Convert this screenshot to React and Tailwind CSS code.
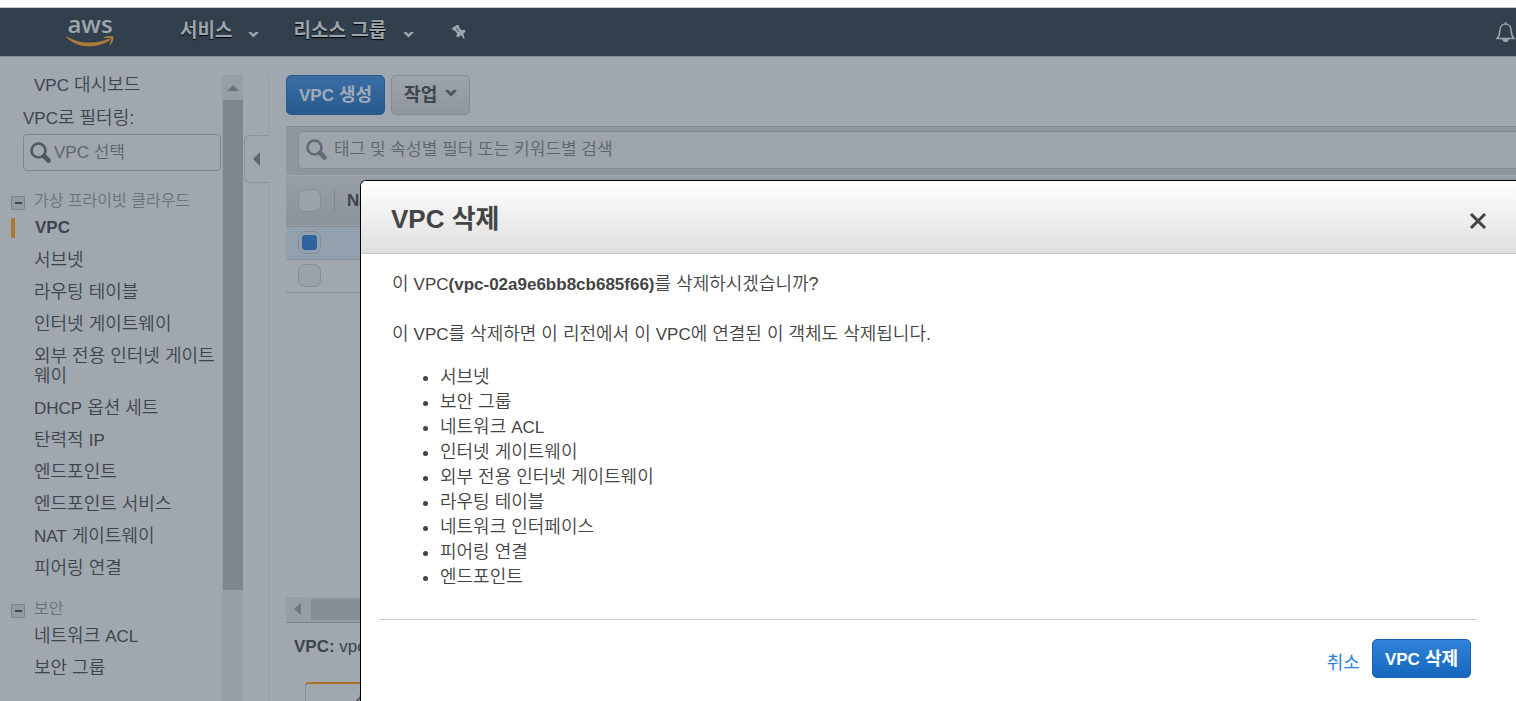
import React from "react";

const Latin = ({ children }) => <span className="text-[17px] leading-none">{children}</span>;

const cloudItems = [
  "서브넷",
  "라우팅 테이블",
  "인터넷 게이트웨이",
  "외부 전용 인터넷 게이트웨이",
  <><Latin>DHCP</Latin> 옵션 세트</>,
  <>탄력적 <Latin>IP</Latin></>,
  "엔드포인트",
  "엔드포인트 서비스",
  <><Latin>NAT</Latin> 게이트웨이</>,
  "피어링 연결",
];

const securityItems = [<>네트워크 <Latin>ACL</Latin></>, "보안 그룹"];

const deletedObjects = [
  "서브넷",
  "보안 그룹",
  <>네트워크 <Latin>ACL</Latin></>,
  "인터넷 게이트웨이",
  "외부 전용 인터넷 게이트웨이",
  "라우팅 테이블",
  "네트워크 인터페이스",
  "피어링 연결",
  "엔드포인트",
];

function Chevron({ className }) {
  return (
    <svg viewBox="0 0 12 8" className={className} aria-hidden="true">
      <path d="M0.5 1 L3.5 1 L6 3.5 L8.5 1 L11.5 1 L11.5 2 L6 7.5 L0.5 2 Z" fill="currentColor" />
    </svg>
  );
}

function SearchIcon({ className }) {
  return (
    <svg viewBox="0 0 22 22" className={className} fill="none" stroke="currentColor" aria-hidden="true">
      <circle cx="8.500" cy="8.500" r="7" strokeWidth="2.6" />
      <path d="M14 14 L18.500 18.500" strokeWidth="4.6" strokeLinecap="round" />
    </svg>
  );
}

function AwsLogo() {
  return (
    <a href="#home" aria-label="aws" className="flex w-12 flex-col items-center pb-[2px] text-[#9da5ad]">
      <span className="h-5 font-['Open_Sans',sans-serif] text-[24px] leading-[16px] font-semibold">aws</span>
      <svg viewBox="0 0 48 11" className="h-[11px] w-12 text-[#a97a3b]" aria-hidden="true">
        <path d="M0.5 0.2 C12 7.500 29 8.500 42 3 C44 2.200 45 3.800 43.4 4.800 C30 13 11.500 12.500 0.2 1.200 Z" fill="currentColor" />
        <path d="M38 1.400 C41 -0.4 46 -0.3 47.300 0.8 C48 2.300 46.800 6.500 44.200 9 C43.600 9.400 43.200 9.100 43.500 8.500 C44.500 6.200 45.400 3.300 44.900 2.500 C44.200 1.700 41 1.900 38.500 2.200 C37.800 2.200 37.600 1.800 38 1.400 Z" fill="currentColor" />
      </svg>
    </a>
  );
}

function Section({ title, children, className }) {
  return (
    <section className={className}>
      <h2 className="flex h-[22px] items-center gap-[9px] text-base leading-[22px] text-[#6a7179]">
        <button aria-label="접기" className="mt-1 flex size-[14px] items-center justify-center rounded-[2px] border border-[#7b8289] bg-[#949ba2]">
          <span className="h-[2px] w-[7px] bg-[#3f464e]" />
        </button>
        {title}
      </h2>
      <ul>{children}</ul>
    </section>
  );
}

function NavItem({ children }) {
  return (
    <li>
      <a href="#nav" className="block py-[6px] pr-[2px] pl-[23px]">{children}</a>
    </li>
  );
}

function Sidebar() {
  return (
    <aside className="flex w-[269px] shrink-0 pt-[18px]">
      <nav className="w-[222px] shrink-0 overflow-hidden leading-5">
        <a href="#dashboard" className="block pl-[34px]"><Latin>VPC</Latin> 대시보드</a>
        <label htmlFor="vpc-filter" className="mt-[13px] block pl-[23px]"><Latin>VPC</Latin>로 필터링:</label>
        <div className="mt-[6px] mr-px ml-[23px] flex h-[37px] items-center rounded-[4px] border border-[#7f868e] pl-[6px]">
          <SearchIcon className="size-[22px] shrink-0 text-[#4f575f]" />
          <input id="vpc-filter" placeholder="VPC 선택" className="min-w-0 flex-1 bg-transparent pl-[2px] text-[17px] outline-none placeholder:text-[#5d656d]" />
        </div>
        <Section title="가상 프라이빗 클라우드" className="mt-[19px] pl-[11px]">
          <li className="flex h-8 items-center">
            <span className="h-5 w-1 rounded-l-[2px] bg-[#ae7a30]" />
            <a href="#vpc" className="pl-5 text-[17px] font-bold">VPC</a>
          </li>
          {cloudItems.map((item, i) => <NavItem key={i}>{item}</NavItem>)}
        </Section>
        <Section title="보안" className="mt-[14px] pl-[11px]">
          {securityItems.map((item, i) => <NavItem key={i}>{item}</NavItem>)}
        </Section>
      </nav>
      <div className="flex w-[21px] flex-col bg-[#979ea6] pl-px">
        <div className="flex h-[25px] items-center justify-center">
          <svg viewBox="0 0 12 6" className="h-[6px] w-3" aria-hidden="true"><path d="M0 6 L6 0 L12 6Z" fill="#6a7179" /></svg>
        </div>
        <div className="h-[490px] bg-[#7f868e]" />
      </div>
      <div className="flex flex-1 flex-col pl-px">
        <div className="h-[60px] border-r border-[#949ba3]" />
        <button aria-label="사이드바 접기" className="flex h-12 items-center rounded-l-[6px] border border-r-0 border-[#8d949c] pl-2">
          <svg viewBox="0 0 7 14" className="h-[14px] w-[7px]" aria-hidden="true"><path d="M7 0 L0 7 L7 14Z" fill="#5f666e" /></svg>
        </button>
        <div className="flex-1 border-r border-[#949ba3]" />
      </div>
    </aside>
  );
}

const box =
  "block size-[23px] appearance-none rounded-[7px] border border-[#858c94] bg-[#9ba2aa] p-[3px]";

function Content() {
  return (
    <main className="flex min-w-0 flex-1 flex-col pt-[18px] pl-[17px]">
      <div className="flex shrink-0 gap-[6px]">
        <button className="h-10 rounded-[5px] border border-[#27598e] bg-linear-to-b from-[#396ea5] to-[#285a8d] px-3 text-lg leading-5 font-bold text-[#a3acb6]"><Latin>VPC</Latin> 생성</button>
        <button className="flex h-10 items-center gap-2 rounded-[5px] border border-[#848b93] bg-linear-to-b from-[#9ca3ab] to-[#8f969e] px-3 text-lg leading-5 font-bold">
          작업 <Chevron className="mb-1 h-2 w-3 text-[#4d555d]" />
        </button>
      </div>
      <div className="mt-[11px] h-[50px] shrink-0 border-t border-b border-t-[#80878f] border-b-[#a0a7af] bg-[#8f969e] pt-1 pl-3">
        <label className="flex h-[38px] items-center rounded-l-[5px] border border-r-0 border-[#858c94] bg-[#9da4ac] pl-[7px]">
          <SearchIcon className="size-[22px] text-[#626a72]" />
          <input aria-label="검색" placeholder="태그 및 속성별 필터 또는 키워드별 검색" className="flex-1 bg-transparent pl-[6px] text-[17px] outline-none placeholder:text-[#5d656d]" />
        </label>
      </div>
      <table className="w-full shrink-0 table-fixed text-left">
        <thead>
          <tr className="h-[50px] border-b border-[#858c94] bg-linear-to-b from-[#979ea6] to-[#8c939b]">
            <th className="w-12 pl-3"><input type="checkbox" aria-label="모두 선택" className={box} /></th>
            <th className="text-[17px]"><span className="block border-l border-[#7e858d] pl-3 leading-[22px]">Name</span></th>
          </tr>
        </thead>
        <tbody>
          <tr className="h-[33px] border-b border-[#858c94] bg-[#93a1af]">
            <td className="pl-3">
              <input type="checkbox" aria-label="VPC 1" defaultChecked className={`${box} checked:bg-[#2e639b] checked:bg-clip-content`} />
            </td>
            <td />
          </tr>
          <tr className="h-[33px] border-b border-[#858c94]">
            <td className="pl-3"><input type="checkbox" aria-label="VPC 2" className={box} /></td>
            <td />
          </tr>
        </tbody>
      </table>
      <div className="mt-[304px] flex h-[26px] shrink-0 items-center border-b border-[#7c838b] bg-[#979ea6] pl-2">
        <svg viewBox="0 0 7 12" className="h-3 w-[7px]" aria-hidden="true"><path d="M7 0 L0 6 L7 12Z" fill="#6e757d" /></svg>
        <div className="ml-[10px] h-[21px] flex-1 bg-[#868d95]" />
      </div>
      <p className="mt-[13px] shrink-0 pl-2 text-[17px] leading-[22px]"><span className="font-bold">VPC:</span> vpc-02a9e6bb8cb685f66</p>
      <div className="mt-[24px] shrink-0 pl-[19px]">
        <button className="h-10 rounded-t-[4px] border border-t-2 border-[#858c94] border-t-[#a97328] px-[49px] text-lg leading-[22px]">설명</button>
      </div>
    </main>
  );
}

function DeleteDialog() {
  return (
    <div role="dialog" aria-labelledby="dialog-title" className="absolute top-[180px] right-0 bottom-0 left-[360px] overflow-hidden rounded-tl-[6px] border-t border-l border-black bg-white text-[#444]">
      <header className="flex h-[73px] items-center justify-between border-b border-[#c8c8c8] bg-linear-to-b from-white to-[#dfdfdf] pr-[29px] pl-[30px]">
        <h1 id="dialog-title" className="mt-1 text-[26px] leading-8 font-bold">VPC 삭제</h1>
        <button aria-label="닫기" className="mt-2">
          <svg viewBox="0 0 18 18" className="size-[18px]" aria-hidden="true"><path d="M3 3 L15 15 M15 3 L3 15" stroke="#444" strokeWidth="3" strokeLinecap="square" /></svg>
        </button>
      </header>
      <div className="pt-[18px] pl-[31px] text-lg leading-[25px]">
        <p>이 <Latin>VPC<span className="font-bold">(vpc-02a9e6bb8cb685f66)</span></Latin>를 삭제하시겠습니까?</p>
        <p className="mt-[25px]">이 <Latin>VPC</Latin>를 삭제하면 이 리전에서 이 <Latin>VPC</Latin>에 연결된 이 객체도 삭제됩니다.</p>
        <ul className="mt-[18px] list-disc pl-12">
          {deletedObjects.map((item, i) => <li key={i}>{item}</li>)}
        </ul>
      </div>
      <footer className="mt-[29px] mr-[39px] ml-[18px] flex items-center justify-end gap-3 border-t border-[#ccc] pt-[19px] pr-[6px]">
        <button className="mt-2 text-lg leading-[22px] font-normal text-[#2e81d8]">취소</button>
        <button className="h-[39px] rounded-[5px] border border-[#1462b4] bg-linear-to-b from-[#3083d9] to-[#1566bd] px-3 text-lg leading-5 font-bold text-white"><Latin>VPC</Latin> 삭제</button>
      </footer>
    </div>
  );
}

export default function App() {
  return (
    <div className="relative flex h-screen flex-col overflow-hidden bg-[#a0a7af] font-['Liberation_Sans','Noto_Sans_CJK_KR',sans-serif] text-lg font-[350] text-[#3c444c]">
      <div className="h-2 shrink-0 border-b border-[#c5cad1] bg-[#fcfdff]" />
      <header className="flex h-[49px] shrink-0 items-center border-b border-[#868d95] bg-[#323f4c] text-[19px] font-bold text-[#9da5ad]">
        <div className="ml-[66px]"><AwsLogo /></div>
        <button className="ml-[66px] flex items-center gap-4 pb-[2px] text-shadow-[0_1px_1px_#000]">서비스 <Chevron className="mt-2 h-[7px] w-[11px]" /></button>
        <button className="ml-[34px] flex items-center gap-[17px] pb-[2px] text-shadow-[0_1px_1px_#000]">리소스 그룹 <Chevron className="mt-2 h-[7px] w-[11px]" /></button>
        <button aria-label="고정" className="ml-[37px]">
          <svg viewBox="0 0 16 16" className="size-4" aria-hidden="true">
            <path d="M6.500 0.800 L8.300 1.800 L8 3.500 L10.500 6.300 L13.500 5.800 L14.800 7.500 L12.300 9.500 L13.800 14.800 L12.800 15 L10.200 11 L7.500 13.200 L5.300 12.600 L6 9.500 L4 6.800 L1.800 6.200 L1 4 Z" fill="currentColor" />
            <path d="M5.200 4 L7.800 7.800" stroke="#323f4c" strokeWidth="0.900" />
          </svg>
        </button>
        <button aria-label="알림" className="ml-auto shrink-0">
          <svg viewBox="0 0 20 22" className="h-[22px] w-5" fill="none" stroke="currentColor" strokeWidth="1.500" aria-hidden="true">
            <path d="M9.500 1 V3 M1 17.500 C4 15 3.500 12 4 8.500 C4.500 1.300 14.500 1.300 15 8.500 C15.500 12 15 15 18 17.500 Z" />
            <path d="M7 18.500 C7.500 21 11.500 21 12 18.500Z" fill="currentColor" />
          </svg>
        </button>
      </header>
      <div className="flex min-h-0 flex-1">
        <Sidebar />
        <Content />
      </div>
      <DeleteDialog />
    </div>
  );
}
